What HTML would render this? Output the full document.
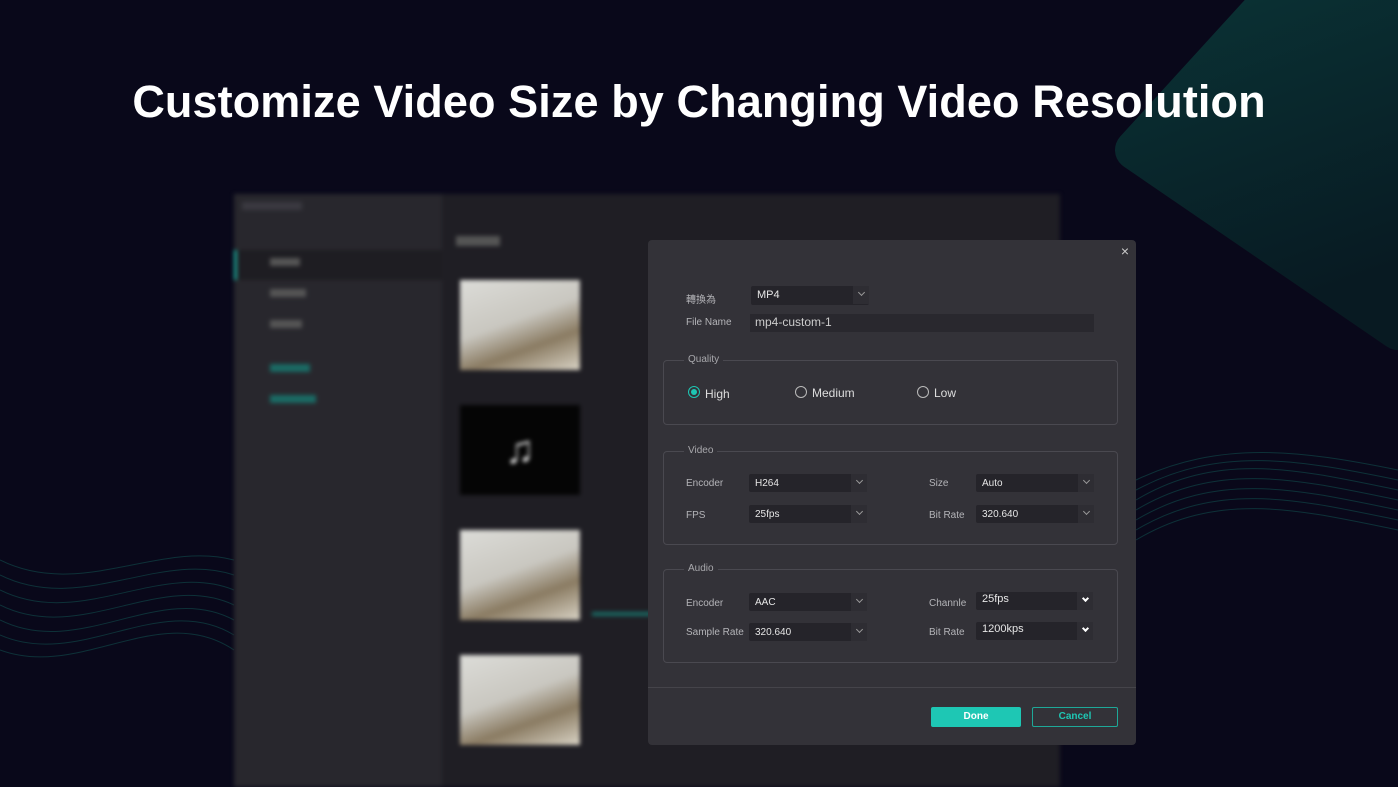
<!DOCTYPE html>
<html><head><meta charset="utf-8"><style>
*{margin:0;padding:0;box-sizing:border-box}
body{width:1398px;height:787px;overflow:hidden;background:#09081a;font-family:"Liberation Sans","Noto Sans CJK TC",sans-serif;position:relative}
.abs{position:absolute}
h1{position:absolute;left:0;width:1398px;top:76px;text-align:center;color:#fff;font-size:45px;font-weight:bold;letter-spacing:0.1px}
.app{left:234px;top:194px;width:826px;height:593px;background:#1f1e24;filter:blur(2px)}
.side{left:0;top:0;width:208px;height:593px;background:#28272d}
.thumb{width:120px;height:90px;background:linear-gradient(160deg,#dcdcd8 0%,#c9c7c0 45%,#8a7b62 70%,#d8d2c4 100%)}
.dlg{left:648px;top:240px;width:488px;height:505px;background:#333238;border-radius:4px;color:#c8c8cc;font-size:11px}
.lbl{position:absolute;color:#b4b4b8;font-size:10px}
.sel{position:absolute;height:18px;background:#25242a;border-radius:2px;color:#e6e6e6;font-size:10px;padding:4px 0 0 6px}
.sel::after{content:"";position:absolute;right:0;top:0;width:16px;height:18px;background:#2e2d33}
.sel i{position:absolute;right:5px;top:4px;width:5px;height:5px;border-right:1px solid #999;border-bottom:1px solid #999;transform:rotate(45deg);z-index:2}
.sel.b i{border-color:#fff;border-width:2px}
.grp{position:absolute;left:15px;width:455px;border:1px solid #4a4950;border-radius:4px}
.grp span{position:absolute;left:20px;top:-7px;background:#333238;padding:0 4px;color:#a8a8ac;font-size:10px}
.rad{position:absolute;width:12px;height:12px;border:1px solid #bbb;border-radius:50%}
</style></head><body>
<svg class="abs" style="left:0;top:0" width="1398" height="787">
<defs><linearGradient id="g" x1="0" y1="0" x2="0.3" y2="1"><stop offset="0" stop-color="#0a3436"/><stop offset="1" stop-color="#081a22"/></linearGradient></defs>
<polygon points="1290,-20 1135,150 1398,330 1430,-20" fill="url(#g)" stroke="url(#g)" stroke-width="40" stroke-linejoin="round"/>
<g stroke="#0f3c40" fill="none" stroke-width="1" opacity="0.8">
<path d="M1136 480 C1220 440 1300 450 1398 470"/><path d="M1136 490 C1220 445 1300 460 1398 480"/><path d="M1136 500 C1220 450 1300 470 1398 490"/><path d="M1136 510 C1220 460 1300 480 1398 500"/><path d="M1136 520 C1220 470 1300 490 1398 510"/><path d="M1136 530 C1220 480 1300 500 1398 520"/><path d="M1136 540 C1220 490 1300 510 1398 530"/>
<path d="M0 560 C80 600 160 540 234 560"/><path d="M0 575 C80 615 160 550 234 575"/><path d="M0 590 C80 630 160 560 234 590"/><path d="M0 605 C80 645 160 570 234 605"/><path d="M0 620 C80 660 160 580 234 620"/><path d="M0 635 C80 670 160 590 234 635"/><path d="M0 650 C80 680 160 600 234 650"/>
</g></svg>
<h1>Customize Video Size by Changing Video Resolution</h1>
<div class="abs app">
<div class="abs side">
<div class="abs" style="left:0;top:56px;width:208px;height:30px;background:#1e1d22"></div>
<div class="abs" style="left:0;top:56px;width:3px;height:30px;background:#1ea898"></div>
<div class="abs" style="left:36px;top:64px;width:30px;height:8px;background:#555"></div>
<div class="abs" style="left:36px;top:95px;width:36px;height:8px;background:#555"></div>
<div class="abs" style="left:36px;top:126px;width:32px;height:8px;background:#555"></div>
<div class="abs" style="left:36px;top:170px;width:40px;height:8px;background:#1a6a64"></div>
<div class="abs" style="left:36px;top:201px;width:46px;height:8px;background:#1a6a64"></div>
<div class="abs" style="left:8px;top:8px;width:60px;height:8px;background:#3a3940"></div>
</div>
<div class="abs" style="left:222px;top:42px;width:44px;height:10px;background:#555"></div>
<div class="abs thumb" style="left:226px;top:86px"></div>
<div class="abs" style="left:226px;top:211px;width:120px;height:90px;background:#050505;color:#ccc;font-size:40px;text-align:center;line-height:90px">♫</div>
<div class="abs thumb" style="left:226px;top:336px"></div>
<div class="abs thumb" style="left:226px;top:461px"></div>
<div class="abs" style="left:358px;top:418px;width:60px;height:4px;background:#1a6a64"></div>
</div>
<div class="abs dlg">
<div class="abs" style="right:7px;top:3px;color:#ccc;font-size:14px">×</div>
<div class="lbl" style="left:38px;top:51px">轉換為</div>
<div class="sel" style="left:103px;top:46px;width:118px;height:19px;font-size:11px;padding-top:3px">MP4<i></i></div>
<div class="lbl" style="left:38px;top:77px">File Name</div>
<div class="abs" style="left:102px;top:74px;width:344px;height:18px;background:#29282e;color:#ccc;font-size:12px;padding:1px 0 0 5px">mp4-custom-1</div>
<div class="grp" style="top:120px;height:65px"><span>Quality</span>
<div class="rad" style="left:24px;top:25px;border-color:#1ec7b4"><div style="margin:2px;width:6px;height:6px;border-radius:50%;background:#1ec7b4"></div></div>
<div class="abs" style="left:41px;top:26px;color:#ddd;font-size:12px">High</div>
<div class="rad" style="left:131px;top:25px"></div><div class="abs" style="left:148px;top:25px;color:#ddd;font-size:12px">Medium</div>
<div class="rad" style="left:253px;top:25px"></div><div class="abs" style="left:270px;top:25px;color:#ddd;font-size:12px">Low</div>
</div>
<div class="grp" style="top:211px;height:94px"><span>Video</span></div>
<div class="lbl" style="left:38px;top:238px">Encoder</div><div class="sel" style="left:101px;top:234px;width:118px">H264<i></i></div>
<div class="lbl" style="left:281px;top:238px">Size</div><div class="sel" style="left:328px;top:234px;width:118px">Auto<i></i></div>
<div class="lbl" style="left:38px;top:270px">FPS</div><div class="sel" style="left:101px;top:265px;width:118px">25fps<i></i></div>
<div class="lbl" style="left:281px;top:270px">Bit Rate</div><div class="sel" style="left:328px;top:265px;width:118px">320.640<i></i></div>
<div class="grp" style="top:329px;height:94px"><span>Audio</span></div>
<div class="lbl" style="left:38px;top:358px">Encoder</div><div class="sel" style="left:101px;top:353px;width:118px">AAC<i></i></div>
<div class="lbl" style="left:281px;top:358px">Channle</div><div class="sel b" style="left:328px;top:352px;width:117px;padding-top:1px;font-size:11px">25fps<i></i></div>
<div class="lbl" style="left:38px;top:387px">Sample Rate</div><div class="sel" style="left:101px;top:383px;width:118px">320.640<i></i></div>
<div class="lbl" style="left:281px;top:387px">Bit Rate</div><div class="sel b" style="left:328px;top:382px;width:117px;padding-top:1px;font-size:11px">1200kps<i></i></div>
<div class="abs" style="left:0;top:447px;width:488px;height:1px;background:#45444a"></div>
<div class="abs" style="left:283px;top:467px;width:90px;height:20px;background:#1ec7b4;color:#fff;font-size:10px;font-weight:bold;text-align:center;line-height:20px;border-radius:2px">Done</div>
<div class="abs" style="left:384px;top:467px;width:86px;height:20px;border:1px solid #1ea898;color:#1ec7b4;font-size:10px;font-weight:bold;text-align:center;line-height:18px;border-radius:2px">Cancel</div>
</div>
</body></html>
